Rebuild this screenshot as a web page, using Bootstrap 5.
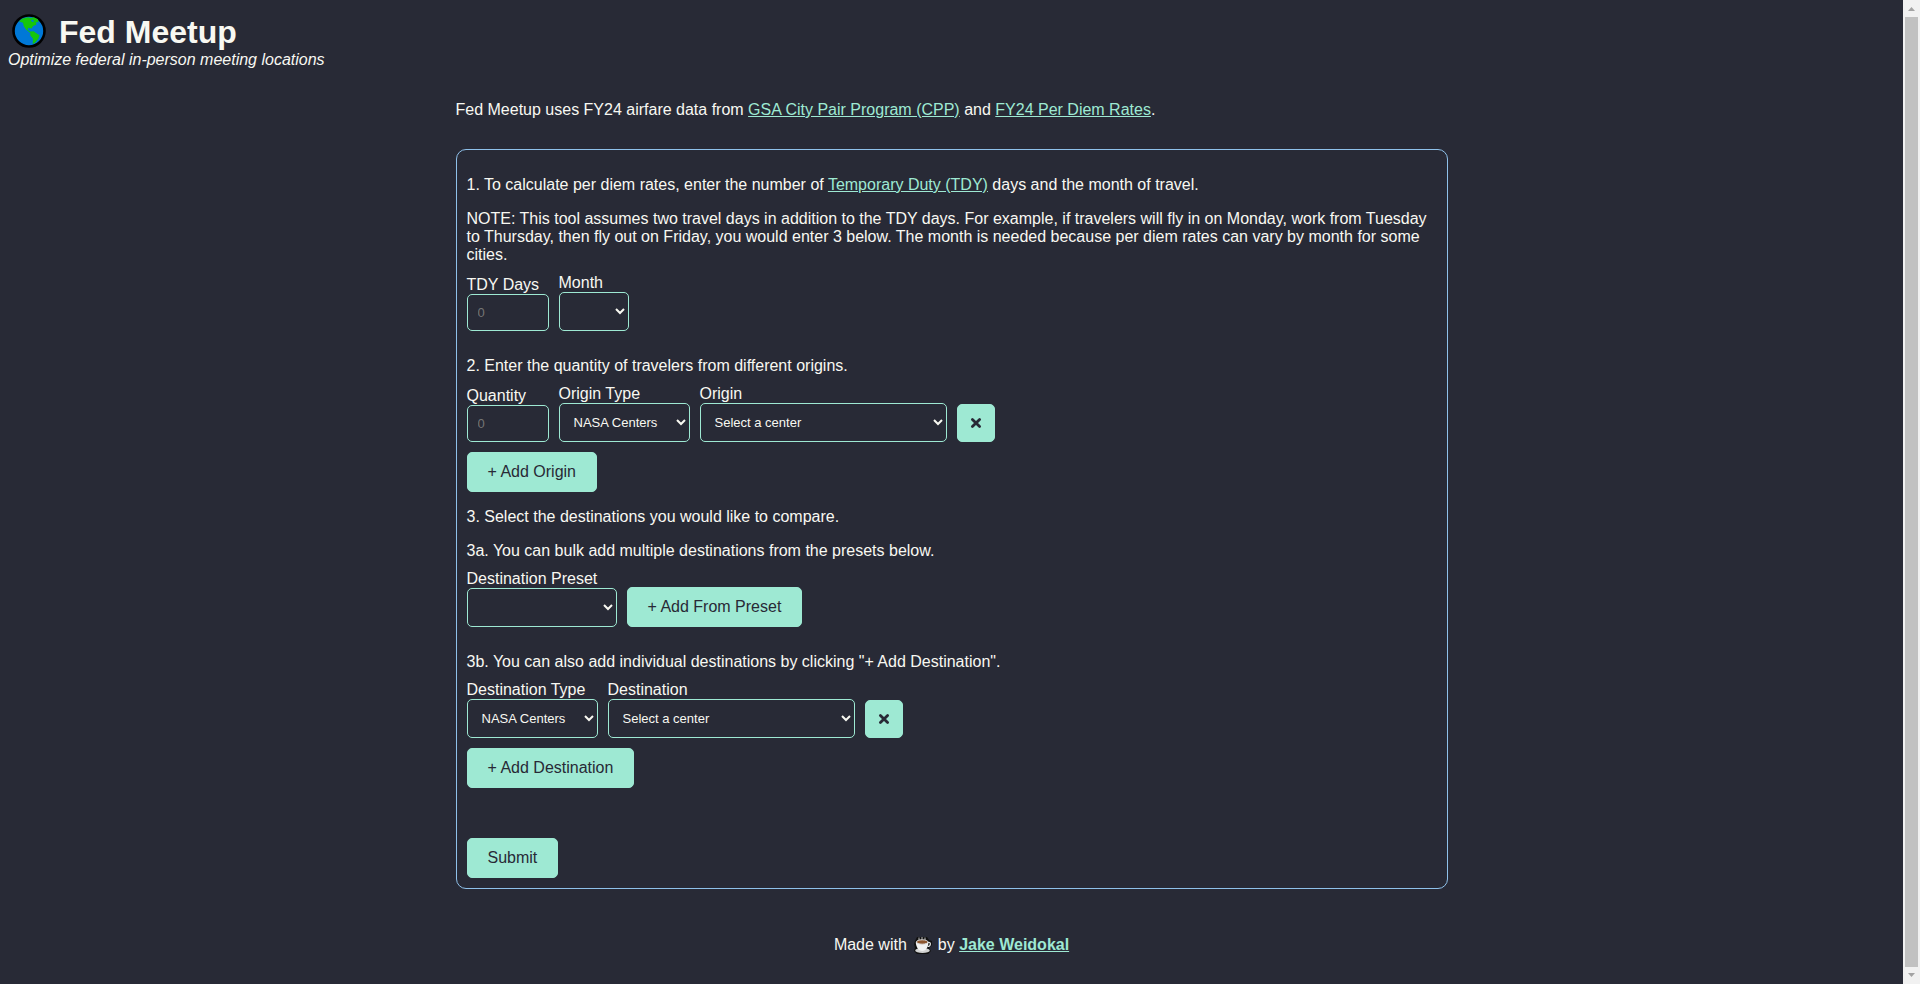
<!DOCTYPE html>
<html lang="en">
<head>
<meta charset="utf-8">
<meta name="viewport" content="width=device-width, initial-scale=1">
<title>Fed Meetup</title>
<link href="https://cdn.jsdelivr.net/npm/bootstrap@5.3.0/dist/css/bootstrap.min.css" rel="stylesheet">
<style>
:root { --ink: #282a36; --paper: #f8f8f2; --mint: #9ee9d3; --sky: #8fc1ea; }
html { scrollbar-width: none; }
body { background: var(--ink); color: var(--paper); font-family: "Liberation Sans", Arial, sans-serif; font-size: 16px; line-height: 18px; }
a, a:hover { color: var(--mint); }
p { margin-bottom: 16px; }
.site-head { padding: 13px 8px 0; }
.site-head h1 { font-size: 32px; line-height: 37px; font-weight: 700; gap: 12px; }
.globe { width: 36px; height: 36px; margin: 0 0 2px 3px; }
.wrap { width: 100%; max-width: 992px; }
.intro { margin: 32px 0 30px; }
.planner { border: 1px solid var(--sky); border-radius: 10px; padding: 26px 10px 10px; }
.fields { gap: 10px; margin-top: -6px; }
.planner label { display: block; }
.planner input, .planner select { display: block; border: 1px solid var(--mint); border-radius: 5px; background: var(--ink); color: var(--paper); font-size: 13px; line-height: 15px; }
.planner input { width: 82px; height: 37px; padding: 10px; }
.planner input::placeholder { color: #757575; }
.planner select { height: 39px; padding: 10px; }
.w-month { width: 70px; }
.w-type { width: 131px; }
.w-place { width: 247px; }
.w-preset { width: 150px; }
.btn-mint { --bs-btn-color: var(--ink); --bs-btn-bg: var(--mint); --bs-btn-border-color: var(--mint); --bs-btn-hover-bg: var(--sky); --bs-btn-hover-color: var(--ink); --bs-btn-padding-x: 20px; --bs-btn-padding-y: 10px; --bs-btn-font-size: 16px; --bs-btn-line-height: 18px; --bs-btn-border-radius: 5px; }
.btn-remove { width: 38px; height: 38px; padding: 0; }
.btn-remove svg { width: 12px; height: 12px; }
.after-row { margin-top: 10px; }
.group { margin-bottom: 26px; }
.submit { margin-top: 50px; }
footer { padding: 47px 0 18px; }
.cup { width: 20px; height: 18px; margin: 0 5px 0 6px; }
.scroller { width: 17px; height: 100vh; background: #f1f1f1; top: 0; }
.scroller svg { width: 17px; height: 17px; }
.thumb { width: 13px; background: #c1c1c1; }
</style>
</head>
<body class="d-flex align-items-start">
<div class="flex-grow-1">
  <header class="site-head">
    <h1 class="d-flex align-items-center m-0">
      <svg class="globe" viewBox="0 0 36 36" aria-hidden="true">
        <circle cx="18" cy="18" r="15.5" fill="#0078d7" stroke="#000" stroke-width="2.6"/>
        <path fill="#16c60c" d="M8 8.500L11 5.7L16.700 4.200L20 5L22.700 4.300L27 6.300L27.500 9.500L25.300 9L25.300 11.700L22 13L20.700 15.500L17.300 14.800L16.700 17L19.300 18.500L22.700 18.300L25 20L28.500 22.300L27.300 25.700L24 29.700L21.700 31L22 25.700L19.300 22.500L19.300 20L14.700 16.300L12.700 13L12 9.700Z"/>
        <path fill="#0078d7" d="M20 7L22 6.500L23 8.500L21 9Z"/>
      </svg>
      <span>Fed Meetup</span>
    </h1>
    <em class="d-block">Optimize federal in-person meeting locations</em>
  </header>

  <main class="wrap mx-auto">
    <p class="intro">Fed Meetup uses FY24 airfare data from <a href="#cpp">GSA City Pair Program (CPP)</a> and <a href="#rates">FY24 Per Diem Rates</a>.</p>

    <form class="planner">
      <p>1. To calculate per diem rates, enter the number of <a href="#tdy">Temporary Duty (TDY)</a> days and the month of travel.</p>
      <p>NOTE: This tool assumes two travel days in addition to the TDY days. For example, if travelers will fly in on Monday, work from Tuesday to Thursday, then fly out on Friday, you would enter 3 below. The month is needed because per diem rates can vary by month for some cities.</p>
      <div class="fields group d-flex flex-wrap align-items-end">
        <div><label for="days">TDY Days</label><input id="days" type="number" placeholder="0"></div>
        <div><label for="month">Month</label><select id="month" class="w-month"><option></option></select></div>
      </div>

      <p>2. Enter the quantity of travelers from different origins.</p>
      <div class="fields d-flex flex-wrap align-items-end">
        <div><label for="qty">Quantity</label><input id="qty" type="number" placeholder="0"></div>
        <div><label for="otype">Origin Type</label><select id="otype" class="w-type"><option>NASA Centers</option></select></div>
        <div><label for="origin">Origin</label><select id="origin" class="w-place"><option>Select a center</option></select></div>
        <button type="button" class="btn btn-mint btn-remove d-flex align-items-center justify-content-center" aria-label="Remove origin"><svg viewBox="0 0 12 12" aria-hidden="true"><path d="M2.400 2.400L9.600 9.600M9.600 2.400L2.400 9.600" stroke="#282a36" stroke-width="2.800" stroke-linecap="round"/></svg></button>
      </div>
      <button type="button" class="btn btn-mint after-row d-block mb-3">+ Add Origin</button>

      <p>3. Select the destinations you would like to compare.</p>
      <p>3a. You can bulk add multiple destinations from the presets below.</p>
      <div class="fields group d-flex flex-wrap align-items-end">
        <div><label for="preset">Destination Preset</label><select id="preset" class="w-preset"><option></option></select></div>
        <button type="button" class="btn btn-mint">+ Add From Preset</button>
      </div>

      <p>3b. You can also add individual destinations by clicking "+ Add Destination".</p>
      <div class="fields d-flex flex-wrap align-items-end">
        <div><label for="dtype">Destination Type</label><select id="dtype" class="w-type"><option>NASA Centers</option></select></div>
        <div><label for="dest">Destination</label><select id="dest" class="w-place"><option>Select a center</option></select></div>
        <button type="button" class="btn btn-mint btn-remove d-flex align-items-center justify-content-center" aria-label="Remove destination"><svg viewBox="0 0 12 12" aria-hidden="true"><path d="M2.400 2.400L9.600 9.600M9.600 2.400L2.400 9.600" stroke="#282a36" stroke-width="2.800" stroke-linecap="round"/></svg></button>
      </div>
      <button type="button" class="btn btn-mint after-row d-block">+ Add Destination</button>
      <button type="submit" class="btn btn-mint submit d-block">Submit</button>
    </form>
  </main>

  <footer class="d-flex justify-content-center">
    <span>Made with</span>
    <svg class="cup" viewBox="0 0 20 18" aria-hidden="true">
      <path d="M2 5L4 1H14L16 4L19 5V9L16 12L18 15L15 18H4L1 15L2 12L1 8Z" fill="#111"/>
      <path d="M6 1.500V4M9 1V4M12 1.500V4" stroke="#bbb" stroke-width="1"/>
      <ellipse cx="9.500" cy="14.500" rx="7.300" ry="2.500" fill="#d2d2d2"/>
      <path d="M2.800 6H15.500C15.500 10 13.500 15 9.200 15S2.800 10 2.800 6Z" fill="#f2f2f2"/>
      <path d="M15 6.500C18.500 5.500 18 10.500 14.500 10.500" fill="none" stroke="#e6e6e6" stroke-width="1.200"/>
      <ellipse cx="9.200" cy="6" rx="5.800" ry="2.200" fill="#8e562e" stroke="#ddd" stroke-width="1"/>
    </svg>
    <span>by <a class="fw-bold" href="#author">Jake Weidokal</a></span>
  </footer>
</div>

<div class="scroller sticky-top flex-shrink-0 d-flex flex-column align-items-center" aria-hidden="true">
  <svg viewBox="0 0 17 17"><path d="M5 11H12L8.500 7Z" fill="#a3a3a3"/></svg>
  <div class="thumb flex-grow-1"></div>
  <svg viewBox="0 0 17 17"><path d="M5 6H12L8.500 10Z" fill="#a3a3a3"/></svg>
</div>
<script src="https://cdn.jsdelivr.net/npm/bootstrap@5.3.0/dist/js/bootstrap.bundle.min.js"></script>
</body>
</html>
